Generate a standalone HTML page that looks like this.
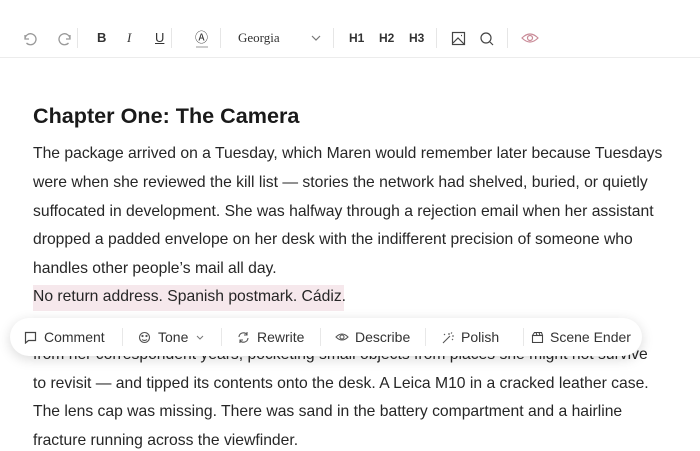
<!DOCTYPE html>
<html><head><meta charset="utf-8"><style>
*{margin:0;padding:0;box-sizing:border-box}
body{width:700px;height:450px;overflow:hidden;background:#fff;font-family:"Liberation Sans",sans-serif;color:#222;position:relative}
.l{position:absolute;left:33px;font-size:15.7px;white-space:nowrap;line-height:20px;color:#262626}
.tb{position:absolute;top:28px;height:20px;font-size:13px;color:#333;line-height:20px}
.sep{position:absolute;top:28px;width:1px;height:20px;background:#e6e6e6}
.pill{position:absolute;left:10px;top:318px;width:632px;height:38px;background:#fff;border-radius:19px;box-shadow:0 3px 12px rgba(0,0,0,.15);font-size:14px;color:#333}
.pill span{position:absolute;top:10px;line-height:18px;white-space:nowrap}
.ps{position:absolute;top:10px;width:1px;height:18px;background:#e8e8e8}
</style></head><body>
<div style="position:absolute;left:24px;top:-12px;font-size:12px;color:#aaa;letter-spacing:1px">OPENING &nbsp;—&nbsp; MAREN POV</div>
<svg style="position:absolute;left:22px;top:31px" width="160" height="16" fill="none" stroke="#999" stroke-width="1.3">
<path d="M3 4v4h4M3 8a5.5 5.5 0 1 1 1.5 4"/>
<path d="M48 4v4h-4M48 8a5.5 5.5 0 1 0-1.5 4"/>
</svg>
<div class="sep" style="left:77px"></div>
<div class="tb" style="left:97px;font-weight:bold">B</div>
<div class="tb" style="left:127px;font-style:italic;font-family:'Liberation Serif',serif">I</div>
<div class="tb" style="left:155px;text-decoration:underline">U</div>
<div class="sep" style="left:171px"></div>
<div class="tb" style="left:195px;font-size:13px">Ⓐ</div>
<div style="position:absolute;left:196px;top:46px;width:12px;height:2px;background:#ccc"></div>
<div class="sep" style="left:220px"></div>
<div class="tb" style="left:238px;font-family:'Liberation Serif',serif;font-size:13px">Georgia</div>
<svg style="position:absolute;left:311px;top:35px" width="10" height="6" fill="none" stroke="#777" stroke-width="1.2"><path d="M1 1l4 4 4-4"/></svg>
<div class="sep" style="left:333px"></div>
<div class="tb" style="left:349px;font-weight:bold;font-size:12px">H1</div>
<div class="tb" style="left:379px;font-weight:bold;font-size:12px">H2</div>
<div class="tb" style="left:409px;font-weight:bold;font-size:12px">H3</div>
<div class="sep" style="left:436px"></div>
<svg style="position:absolute;left:451px;top:31px" width="60" height="16" fill="none" stroke="#444" stroke-width="1.2">
<rect x="1.5" y="1.5" width="12" height="12"/><path d="M2 12l5-5 6 6M10 4.5h1"/>
<circle cx="35" cy="7" r="5"/><path d="M39 11l3 3"/>
</svg>
<div class="sep" style="left:507px"></div>
<svg style="position:absolute;left:521px;top:32px" width="18" height="12" fill="none" stroke="#c98a97" stroke-width="1.2"><path d="M1 6Q9-2 17 6Q9 14 1 6Z"/><circle cx="9" cy="6" r="2.5"/></svg>
<div style="position:absolute;left:0;top:57px;width:700px;height:1px;background:#ececec"></div>

<div style="position:absolute;left:33px;top:103px;font-size:21.6px;font-weight:bold;color:#1a1a1a;white-space:nowrap">Chapter One: The Camera</div>
<div class="l" style="top:144px">The package arrived on a Tuesday, which Maren would remember later because Tuesdays</div>
<div class="l" style="top:173px">were when she reviewed the kill list — stories the network had shelved, buried, or quietly</div>
<div class="l" style="top:202px">suffocated in development. She was halfway through a rejection email when her assistant</div>
<div class="l" style="top:230px">dropped a padded envelope on her desk with the indifferent precision of someone who</div>
<div class="l" style="top:259px">handles other people’s mail all day.</div>
<div style="position:absolute;left:33px;top:285px;width:311px;height:26px;background:#f6e8ec"></div>
<div class="l" style="top:287px">No return address. Spanish postmark. Cádiz.</div>
<div class="l" style="top:345px">from her correspondent years, pocketing small objects from places she might not survive</div>
<div class="l" style="top:374px">to revisit — and tipped its contents onto the desk. A Leica M10 in a cracked leather case.</div>
<div class="l" style="top:402px">The lens cap was missing. There was sand in the battery compartment and a hairline</div>
<div class="l" style="top:431px">fracture running across the viewfinder.</div>

<div class="pill">
<svg style="position:absolute;left:14px;top:13px" width="14" height="13" fill="none" stroke="#444" stroke-width="1.2"><path d="M1.5 1.5h10v8h-7l-3 2.5z"/></svg>
<span style="left:34px">Comment</span>
<div class="ps" style="left:112px"></div>
<svg style="position:absolute;left:128px;top:13px" width="13" height="13" fill="none" stroke="#555" stroke-width="1.1"><circle cx="6.5" cy="6.5" r="5"/><circle cx="4.5" cy="5" r=".6"/><circle cx="8.5" cy="5" r=".6"/><path d="M4 8.5q2.5 2 5 0"/></svg>
<span style="left:148px">Tone</span>
<svg style="position:absolute;left:186px;top:17px" width="8" height="5" fill="none" stroke="#777"><path d="M1 1l3 3 3-3"/></svg>
<div class="ps" style="left:211px"></div>
<svg style="position:absolute;left:227px;top:13px" width="13" height="13" fill="none" stroke="#555" stroke-width="1.1"><path d="M2 6a4.5 4.5 0 0 1 8-2.5M11 7a4.5 4.5 0 0 1-8 2.5M10 1v3H7M3 12V9h3"/></svg>
<span style="left:247px">Rewrite</span>
<div class="ps" style="left:310px"></div>
<svg style="position:absolute;left:325px;top:14px" width="14" height="10" fill="none" stroke="#555" stroke-width="1.1"><path d="M1 5Q7-1 13 5Q7 11 1 5Z"/><circle cx="7" cy="5" r="2"/></svg>
<span style="left:345px">Describe</span>
<div class="ps" style="left:415px"></div>
<svg style="position:absolute;left:431px;top:13px" width="13" height="13" fill="none" stroke="#555" stroke-width="1.1"><path d="M2 12l7-7M8 2v2M11 5h2M10 2.5l1-1M3 3l1 1M12 9l-1-1"/></svg>
<span style="left:451px">Polish</span>
<div class="ps" style="left:513px"></div>
<svg style="position:absolute;left:521px;top:13px" width="13" height="12" fill="none" stroke="#444" stroke-width="1.1"><rect x="1.5" y="4.5" width="10" height="7"/><path d="M1.5 4.5l2-3h7l1 3M5 1.5l1 3M8 1.5l1 3"/></svg>
<span style="left:540px">Scene Ender</span>
</div>
</body></html>
